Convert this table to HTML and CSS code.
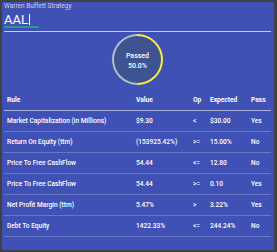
FILE: index.html
```html
<!DOCTYPE html>
<html>
<head>
<meta charset="utf-8">
<link rel="stylesheet" href="styles.css">
</head>
<body>
<div class="panel">
  <div class="field">
    <div class="label">Warren Buffett Strategy</div>
    <div class="symbol"><span class="value">AAL</span><span class="caret"></span></div>
  </div>
  <div class="divider"></div>
  <div class="gauge-wrap">
    <div class="gauge">
      <div class="gauge-inner">
        <div>Passed</div>
        <div>50.0%</div>
      </div>
    </div>
  </div>
  <div class="table">
    <div class="row head">
      <div>Rule</div><div>Value</div><div>Op</div><div>Expected</div><div>Pass</div>
    </div>
    <div class="row">
      <div>Market Capitalization (in Millions)</div><div>$9.30</div><div>&lt;</div><div>$30.00</div><div>Yes</div>
    </div>
    <div class="row">
      <div>Return On Equity (ttm)</div><div>(153925.42%)</div><div>&gt;=</div><div>15.00%</div><div>No</div>
    </div>
    <div class="row">
      <div>Price To Free CashFlow</div><div>54.44</div><div>&lt;=</div><div>12.80</div><div>No</div>
    </div>
    <div class="row">
      <div>Price To Free CashFlow</div><div>54.44</div><div>&gt;=</div><div>0.10</div><div>Yes</div>
    </div>
    <div class="row">
      <div>Net Profit Margin (ttm)</div><div>5.47%</div><div>&gt;</div><div>3.22%</div><div>Yes</div>
    </div>
    <div class="row">
      <div>Debt To Equity</div><div>1422.33%</div><div>&lt;=</div><div>244.24%</div><div>No</div>
    </div>
  </div>
</div>
</body>
</html>
```
FILE: styles.css
```css
html, body {
  margin: 0;
  padding: 0;
}
body {
  background: #404040;
  width: 277px;
  height: 252px;
  overflow: hidden;
  font-family: Roboto, "Liberation Sans", sans-serif;
  color: #ffffff;
}
.panel {
  margin: 2px 3px 0 2px;
  height: 248px;
  background: #3f51b5;
  padding: 0 3px 0 2px;
  box-sizing: border-box;
}
.field {
  display: flex;
  flex-direction: column;
  align-items: flex-start;
}
.label {
  font-size: 6.5px;
  line-height: 9px;
  color: rgba(255, 255, 255, 0.72);
}
.symbol {
  margin-top: 2px;
  width: 35px;
  font-size: 13px;
  line-height: 13px;
  display: flex;
  align-items: center;
  border-bottom: 2px solid #2f9a8c;
}
.caret {
  display: inline-block;
  width: 1px;
  height: 11px;
  background: #ffffff;
  margin-left: 1px;
}
.divider {
  margin-top: 3px;
  height: 1px;
  background: #c5cae9;
}
.gauge-wrap {
  display: flex;
  justify-content: center;
  padding-top: 2px;
  height: 58px;
  box-sizing: border-box;
}
.gauge {
  width: 51px;
  height: 51px;
  border-radius: 50%;
  background: conic-gradient(#ffeb3b 0 50%, #b4bcc4 50% 100%);
  padding: 2px;
  box-sizing: border-box;
}
.gauge-inner {
  width: 100%;
  height: 100%;
  border-radius: 50%;
  background: #3e5491;
  display: flex;
  flex-direction: column;
  justify-content: center;
  align-items: center;
  font-size: 7px;
  line-height: 10px;
  font-weight: 500;
  padding-top: 3px;
  box-sizing: border-box;
}
.table {
  display: flex;
  flex-direction: column;
}
.row {
  display: grid;
  grid-template-columns: 129px 57px 17px 41px 1fr;
  padding-left: 3px;
  height: 20px;
  align-items: center;
  border-bottom: 1px solid rgba(255, 255, 255, 0.22);
  font-size: 6.6px;
  font-weight: 500;
  white-space: nowrap;
}
.row.head {
  font-weight: 700;
  border-bottom-color: rgba(255, 255, 255, 0.55);
}
```
